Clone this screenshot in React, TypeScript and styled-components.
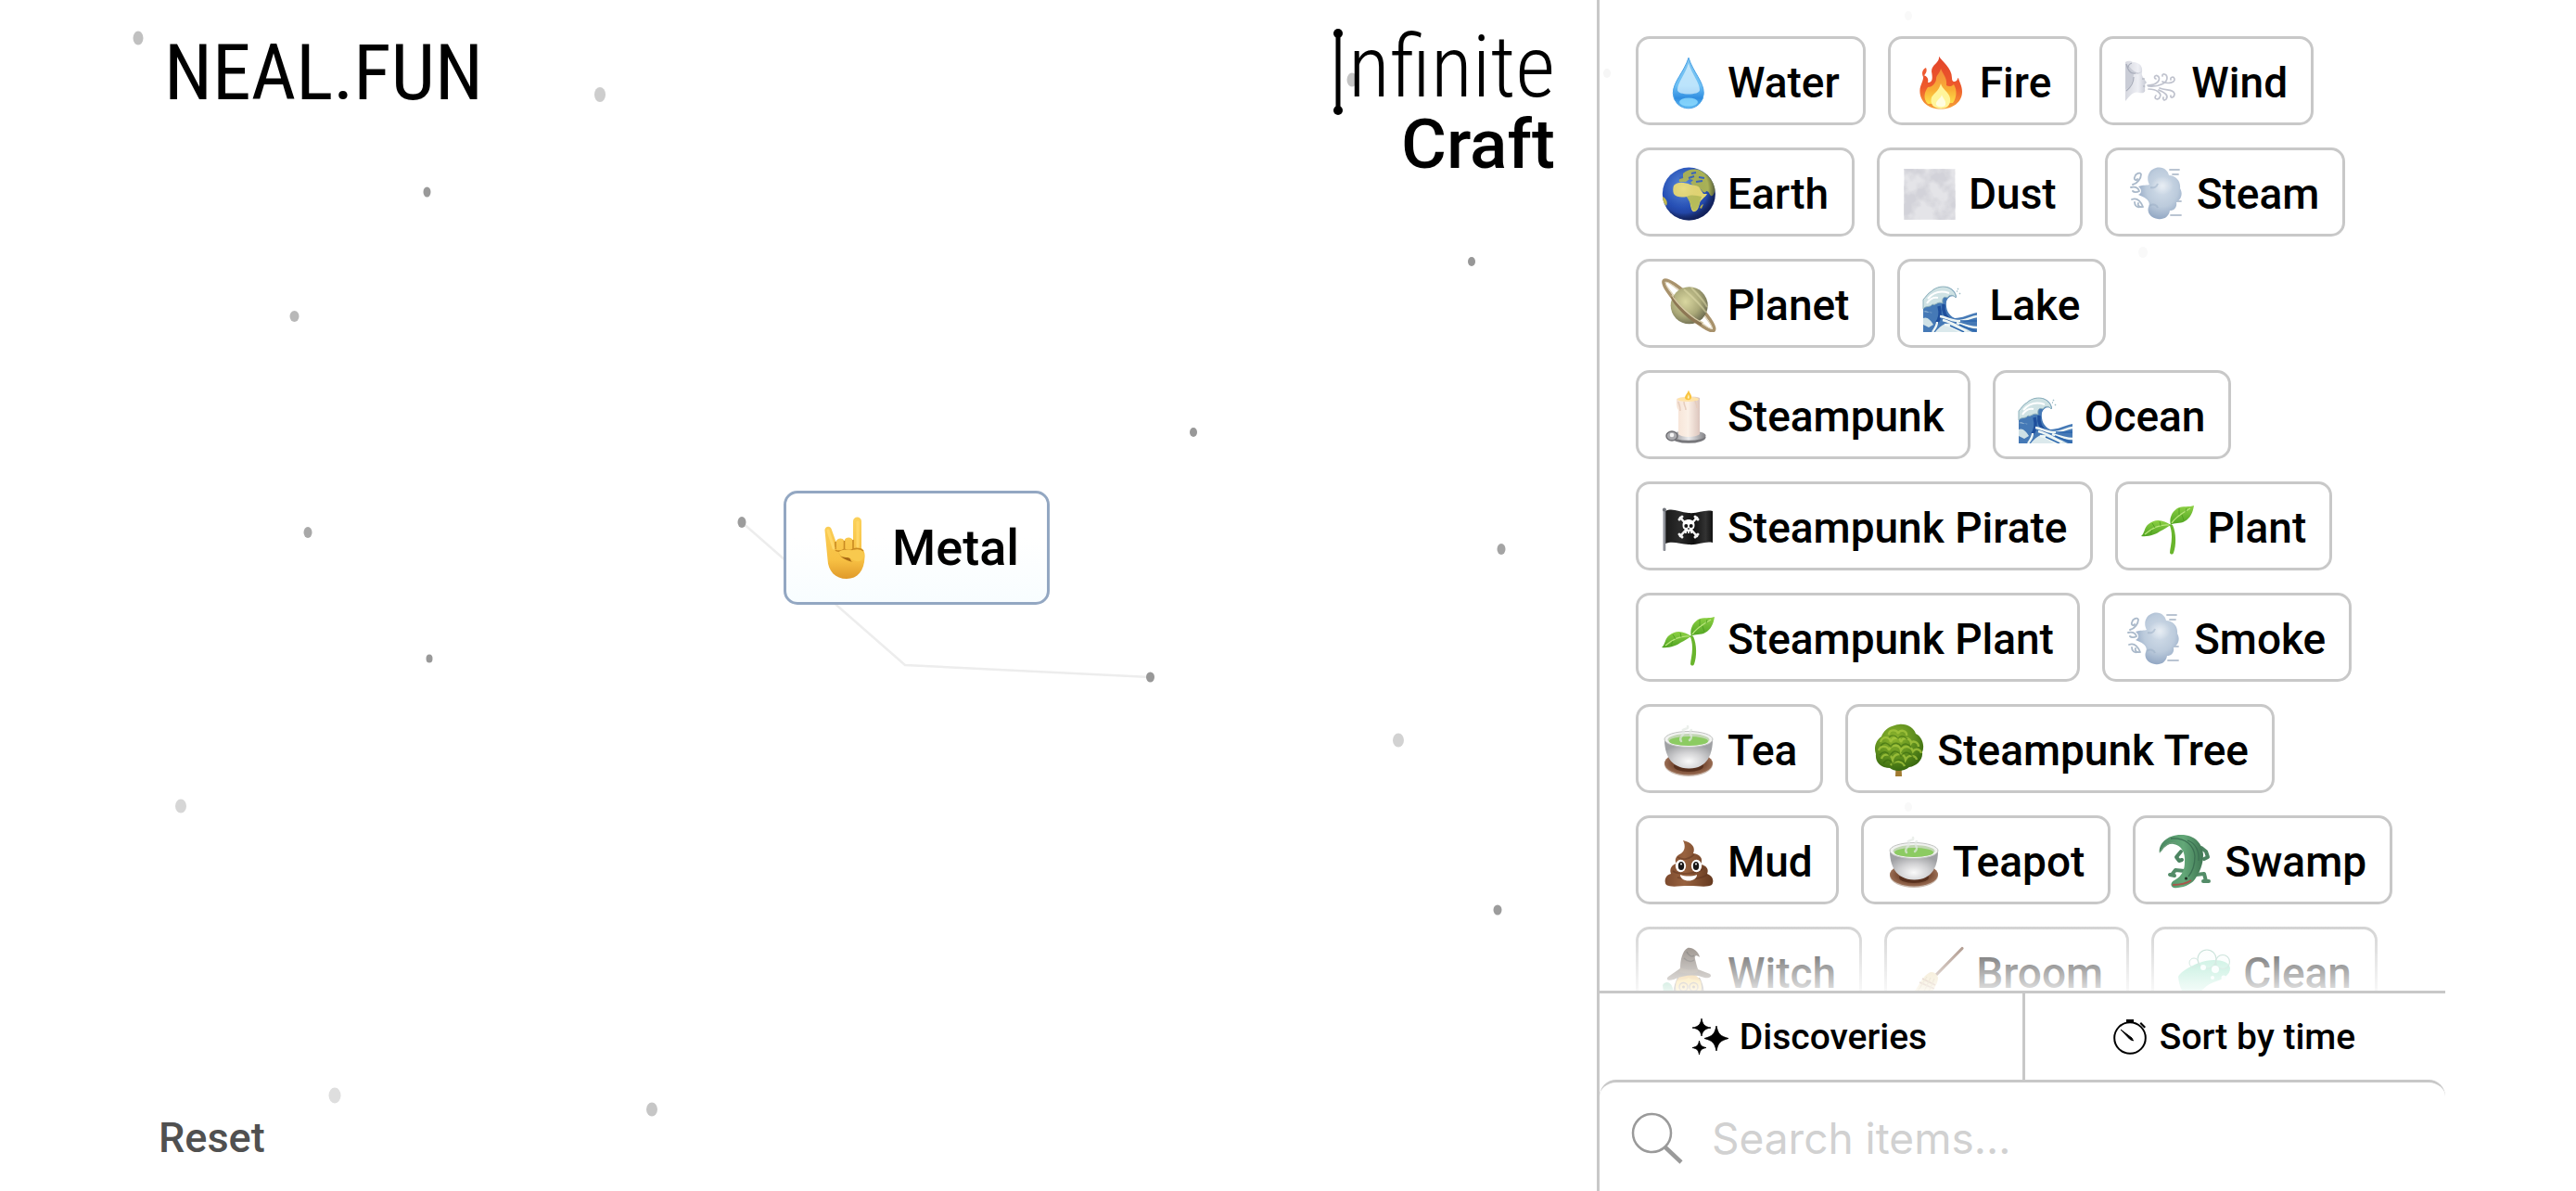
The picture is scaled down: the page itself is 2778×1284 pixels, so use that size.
import React, { useState } from "react";
import styled, { createGlobalStyle } from "styled-components";

const GlobalStyle = createGlobalStyle`
  *, *::before, *::after { box-sizing: border-box; }
  body {
    margin: 0;
    background: #fff;
    color: #000;
    font-family: Roboto, "Liberation Sans", sans-serif;
  }
`;

const line = "#c8c8c8";

const Page = styled.div`
  position: relative;
  display: flex;
  height: 100vh;
  padding: 0 141px;
  overflow: hidden;
`;

const Field = styled.svg`
  position: absolute;
  inset: 0;
  width: 100%;
  height: 100%;
  pointer-events: none;
`;

const Shades = styled.svg`
  position: absolute;
  width: 0;
  height: 0;
`;

const Canvas = styled.main`
  position: relative;
  flex: 1;
  display: flex;
  flex-direction: column;
  justify-content: space-between;
  align-items: flex-start;
  padding: 0 45px 24px 30px;
`;

const Header = styled.header`
  display: flex;
  justify-content: space-between;
  align-self: stretch;
  padding-top: 31px;
`;

const SiteLink = styled.a`
  height: 96px;
  padding-left: 6px;
  color: #000;
  font-family: "Roboto Condensed", Roboto, sans-serif;
  font-size: 84px;
  font-weight: 400;
  line-height: 96px;
  text-decoration: none;
`;

const Title = styled.h1`
  display: flex;
  flex-direction: column;
  align-items: flex-end;
  margin: 0;
`;

const TitleTop = styled.span`
  display: flex;
  align-items: flex-start;
  gap: 5px;
  height: 84px;
  font-family: "Roboto Condensed", Roboto, sans-serif;
  font-size: 93px;
  font-weight: 300;
  line-height: 84px;
`;

const TitleBottom = styled.span`
  font-size: 75px;
  font-weight: 500;
  line-height: 80px;
`;

const ResetButton = styled.button`
  padding: 6px 0;
  border: 0;
  background: none;
  color: #505050;
  font: 500 45px/54px Roboto, sans-serif;
`;

const Node = styled.div`
  position: absolute;
  left: 704px;
  top: 529px;
  display: flex;
  align-items: center;
  gap: 17px;
  padding: 25px 30px 25px 31px;
  border: 3px solid #93a7c2;
  border-radius: 15px;
  background: linear-gradient(#fff 40%, #f8fdff);
  font-size: 54px;
  font-weight: 500;
  line-height: 67px;
`;

const Sidebar = styled.aside`
  position: relative;
  display: flex;
  flex-direction: column;
  width: 915px;
  border-left: 3px solid ${line};
`;

const Items = styled.div`
  position: relative;
  flex: 1;
  min-height: 0;
  display: flex;
  flex-wrap: wrap;
  align-content: flex-start;
  gap: 24px;
  padding: 39px 24px 0 39px;
  overflow: hidden;

  &::after {
    content: "";
    position: absolute;
    left: 0;
    right: 0;
    bottom: 0;
    height: 90px;
    background: linear-gradient(rgba(255, 255, 255, 0), rgba(255, 255, 255, 0.88));
  }
`;

const Chip = styled.button`
  display: flex;
  align-items: center;
  gap: 12px;
  height: 96px;
  padding: 4px 25px 0 24px;
  border: 3px solid ${line};
  border-radius: 15px;
  background: #fff;
  color: #000;
  font: 500 46px/58px Roboto, sans-serif;
`;

const Emoji = styled.svg<{ $large?: boolean }>`
  flex: none;
  width: ${(p) => (p.$large ? 66 : 60)}px;
  height: ${(p) => (p.$large ? 67 : 58)}px;
`;

const Controls = styled.div`
  display: grid;
  grid-template-columns: 1fr 1fr;
  border-top: 3px solid ${line};
`;

const Control = styled.button`
  display: flex;
  justify-content: center;
  align-items: center;
  gap: 12px;
  height: 93px;
  padding: 0 9px 0 6px;
  border: 0;
  background: #fff;
  color: #000;
  font: 500 39px/48px Roboto, sans-serif;

  & + & { border-left: 3px solid ${line}; }
`;

const ControlIcon = styled.svg`
  width: 39px;
  height: 39px;
`;

const Search = styled.label`
  display: flex;
  align-items: center;
  gap: 30px;
  height: 120px;
  padding: 3px 33px 0 34px;
  border-top: 3px solid ${line};
  border-radius: 18px;
  background: #fff;
`;

const SearchIcon = styled.svg`
  flex: none;
  width: 57px;
  height: 57px;
`;

const SearchInput = styled.input`
  flex: 1;
  min-width: 0;
  padding: 0;
  border: 0;
  outline: 0;
  background: none;
  color: #000;
  font: 400 46px/60px Inter, sans-serif;

  &::placeholder { color: #d1d1d1; opacity: 1; }
`;

type Dot = [x: number, y: number, rx: number, ry: number, fill: string];

const dots: Dot[] = [
  [149, 41, 5.5, 7.5, "#c0c0c0"],
  [647, 102, 6, 8, "#cdcdcd"],
  [460.5, 207, 4, 5.5, "#999"],
  [317.5, 341, 5, 6, "#b8b8b8"],
  [332, 574, 4.5, 6, "#a8a8a8"],
  [463, 710, 3.5, 4.5, "#999"],
  [195, 869, 6, 7.5, "#d6d6d6"],
  [361, 1181, 6.5, 8.5, "#dedede"],
  [703, 1196, 6, 7.5, "#c6c6c6"],
  [800, 563, 4.5, 6, "#9c9c9c"],
  [1240.5, 730, 4.5, 5.5, "#989898"],
  [1287, 466, 4, 5, "#989898"],
  [1587, 282, 4, 5, "#989898"],
  [1619, 592, 4.5, 6, "#a4a4a4"],
  [1508, 798, 6, 7.5, "#d2d2d2"],
  [1615, 981, 4.5, 5.5, "#9c9c9c"],
  [1458, 86, 5.5, 7.5, "#c4c4c4"],
  [1733, 79, 4, 5, "#f6f6f6"],
  [2311, 272, 5, 6, "#f9f9f9"],
  [2058, 17, 4, 5, "#f9f9f9"],
  [2058, 870, 4, 5, "#f9f9f9"],
];

const Wave = () => (
  <>
    <path d="M1 58V23C4 20 6 16 10 14C15 9 23 8 29 10C34 12 37 17 37 21C33 18 28 19 26 25C25 33 28 40 35 43C43 43 50 39 59 37V58Z" fill="#4579b6" />
    <path d="M14 58C20 50 26 47 33 49C42 52 50 56 54 58Z" fill="#dbe9ec" />
    <path d="M1 23C4 20 6 16 10 14C15 9 23 8 28 10C33 12 37 17 36 21C33 17 29 18 27 21C23 19 21 22 22 27C17 24 14 30 11 28C8 32 4 29 1 33Z" fill="#cfe2e4" stroke="#8fb2bc" strokeWidth="1" />
    <path d="M6 22C12 15 20 13 29 16M5 27C9 21 13 20 17 21" stroke="#fff" strokeWidth="2" fill="none" />
    <path d="M18 30C20 37 20 43 15 49M23 28C22 36 25 42 31 46" stroke="#1e4f9c" strokeWidth="3.5" fill="none" />
    <path d="M1 36C5 34 8 38 11 37M1 43C5 41 9 45 12 50L7 53L1 50Z" fill="#cfe1e6" />
    <path d="M19 41C26 42 31 46 38 46C46 46 52 42 59 41M22 45C32 47 41 54 48 57M24 50C30 50 38 56 41 58M37 48C46 51 53 53 59 53M16 47C16 52 13 55 11 58" stroke="#eef6f5" strokeWidth="2.4" fill="none" />
    <path d="M30 51L45 58M40 50L58 57M41 46L59 46" stroke="#2b66ad" strokeWidth="1.4" fill="none" />
    <path d="M38 11l1 1M41 16l-1 1M37 14l1 0" stroke="#9dbcc4" strokeWidth="1.5" />
  </>
);

const Cloud = () => (
  <>
    <path d="M43 3H53M48 37H55M44 52H55M46 8H52" stroke="#b9c4d2" strokeWidth="1.8" strokeLinecap="round" />
    <path d="M9 21C14 19 19 20 21 19C17 12 20 3 28 1C36-1 41 4 42 9C49 9 55 15 54 23C58 30 54 36 50 38C51 43 48 47 43 47C42 54 36 57 30 56C22 55 18 49 20 43C23 37 17 33 9 30C13 28 13 24 9 21Z" fill="url(#cloud)" />
    <ellipse cx="35" cy="20" rx="12" ry="10" fill="url(#mist)" />
    <path d="M22 22C26 23 29 21 30 18M21 42C25 39 29 41 30 44" stroke="#98abc3" strokeWidth="2" fill="none" opacity=".5" />
    <path d="M3 19C8 18 12 12 12 8C11 5 6 7 5 11C4 14 7 15 8 13M1 22C6 21 9 23 10 26C7 28 4 27 3 26M2 35C7 33 11 36 14 43C10 44 8 41 9 39M5 38C5 42 8 44 11 43" stroke="#aab9ca" strokeWidth="1.8" fill="none" strokeLinecap="round" />
  </>
);

const Sprout = () => (
  <>
    <path d="M31 25C33 28 34 33 34 39C34 46 32 52 32 56C33 58 35 58 36 56C39 48 39 35 35 26Z" fill="#69b52c" />
    <path d="M33 26C26 21 17 18 9 25C4 29 5 35 1 38C9 39 17 36 21 33C26 31 29 28 33 26Z" fill="url(#leaf)" />
    <path d="M33 26C31 19 34 12 40 8C46 5 53 7 58 5C57 12 54 19 48 22C43 25 37 23 33 26Z" fill="url(#leaf)" />
    <path d="M31 26C22 25 13 29 5 36M34 24C38 17 46 13 54 8" stroke="#b9e57c" strokeWidth="1.2" fill="none" />
    <path d="M13 24L16 29M21 22L22 27M11 36L13 31M42 8L42 15M50 8L49 12M47 21L45 15" stroke="#4a9a1e" strokeWidth=".8" />
  </>
);

const Tea = () => (
  <>
    <ellipse cx="30" cy="44" rx="26" ry="13" fill="#c9b9ae" />
    <ellipse cx="30" cy="43" rx="26" ry="12.5" fill="url(#saucer)" />
    <ellipse cx="30" cy="46" rx="16" ry="6" fill="#4b2716" opacity=".7" />
    <path d="M4 17C4 33 10 48 30 48.500S56 33 56 17Z" fill="url(#cup)" />
    <ellipse cx="30" cy="17" rx="26" ry="8.500" fill="#f1f2f0" stroke="#c2c4c2" strokeWidth="1" />
    <ellipse cx="30" cy="17.500" rx="22.500" ry="6.500" fill="#c2d6b4" />
    <ellipse cx="30" cy="19" rx="21" ry="5" fill="#8ccb62" />
    <path d="M22 19C18 14 28 12 24 7C27 4 30 7 29 3M31 18C37 13 28 11 33 7" stroke="#e3e8e2" strokeWidth="2.500" fill="none" opacity=".7" strokeLinecap="round" />
  </>
);

const art: Record<string, React.ReactNode> = {
  water: (
    <>
      <path d="M30 2.300C25 18 13.300 28 13.300 40.500A16.500 16.300 0 0 0 46.300 40.500C46.300 28 35 18 30 2.300Z" fill="url(#drop)" stroke="#4aa2e6" strokeWidth="1" />
      <path d="M30 8C26 21 18 29 18 37C18 43 42 43 42 37C42 29 34 21 30 8Z" fill="#e6f7ff" opacity=".65" />
      <ellipse cx="30" cy="50" rx="10" ry="4.500" fill="#8fdcff" opacity=".8" />
    </>
  ),
  fire: (
    <>
      <path d="M28 .7C31 6 42 13 42 24C42 28 44 29 47 27C48 26 48 24 49 24C50 29 53 32 53 39C53 50 43 57.500 30 57.500C17 57.500 7.400 50 7.400 38C7.400 31 12 27 11 21C16 22 17 26 16 29C22 29 21 23 20 17C20 9 29 8 28 .7Z" fill="url(#flame)" />
      <path d="M14 13C10 15 9 19 11 23C13 20 16 17 14 13Z" fill="#ee5b32" />
      <path d="M30 14C33 21 37 24 36 32C39 34 42 33 44 31C48 37 47 46 43 51L16 52C10 46 13 38 16 34C21 34 25 29 25 25C25 21 29 19 30 14Z" fill="url(#flameInner)" />
      <path d="M30 30C31 36 39 39 40 46C41 54 36 57 30 57C22 57 18 52 20 45C22 41 28 38 30 30Z" fill="#fff59a" />
      <path d="M31 42C32 46 36 48 35 53C34 56 27 56 25 53C24 48 30 47 31 42Z" fill="#fffde0" />
    </>
  ),
  wind: (
    <>
      <path d="M1 7C5 5 7 6 9 7C17 7 20 12 19 18C18 21 20 23 24 29L22 31C23 33 22 34 22 36C23 39 21 41 16 40C10 38 7 42 1 49Z" fill="url(#face)" />
      <path d="M1 9C5 9 7 16 13 18C16 19 18 18 19 16C17 21 12 20 10 18C10 25 8 31 4 35L1 36Z" fill="#c9ccd6" />
      <path d="M2 9C4 17 8 20 12 19M10 23C10 30 7 34 2 38M19 25H22M20 33H22M8 8C5 9 4 11 4 13" stroke="#a9adba" strokeWidth="1.200" fill="none" />
      <path d="M25 32C36 32 40 25 36 22C33 20 31 24 34 25M26 33C38 34 46 29 46 24C46 19 40 19 41 22M41 28C47 31 55 29 54 25C53 22 49 23 50 26M26 36C35 36 41 41 38 45C36 49 31 46 34 43M37 37C44 40 48 43 45 47C43 49 41 47 42 45M38 35C45 38 53 36 54 41C54 46 49 46 50 43" stroke="#c0c3ce" strokeWidth="1.700" fill="none" strokeLinecap="round" />
    </>
  ),
  earth: (
    <>
      <circle cx="30.300" cy="29" r="28.500" fill="url(#sea)" />
      <path d="M24 7C28 3 36 1 43 4C51 8 57 15 58.500 24C58 29 56 32 54 31C52 29 52 26 49 26C48 29 45 27 43 24C40 23 38 20 35 20L32 17L35 14L31 13L27 16L20 16C19 13 22 12 24 11Z" fill="#a9b257" />
      <path d="M14 20C19 15 26 17 32 19C37 20 41 20 42 23L46 29H50C48 33 43 35 42 39C41 43 40 47 37 48C33 49 33 44 32 42C32 38 30 35 28 32C23 33 17 33 14 29C13 26 13 23 14 20Z" fill="#e5d873" />
      <path d="M28 32C33 29 39 31 44 32C43 36 41 39 41 42C39 47 37 48 35 47C32 44 33 39 30 36Z" fill="#a8b550" opacity=".7" />
      <path d="M2 32C6 34 8 38 6 42C4 40 2 37 2 32ZM44 41L46 40L44 45L42 44Z" fill="#c2b952" />
      <path d="M30 12L36 10M38 16L45 15M41 11L47 12M20 12L24 11M33 7L38 6" stroke="#3863bd" strokeWidth="2" />
      <circle cx="30.300" cy="29" r="28.500" fill="url(#globeShade)" />
    </>
  ),
  dust: (
    <>
      <rect x="2.700" y="2.300" width="54.600" height="54.500" fill="#e4e4e8" />
      <rect x="2.700" y="2.300" width="54.600" height="54.500" filter="url(#haze)" opacity=".7" />
    </>
  ),
  cloud: <Cloud />,
  planet: (
    <>
      <ellipse cx="30.300" cy="29.300" rx="38" ry="7.500" transform="rotate(45 30.300 29.300)" fill="none" stroke="#a8926c" strokeWidth="3.600" />
      <ellipse cx="30.300" cy="29.300" rx="35" ry="4.500" transform="rotate(45 30.300 29.300)" fill="none" stroke="#ded3b8" strokeWidth="1.200" />
      <circle cx="30.700" cy="29.300" r="20" fill="url(#saturn)" />
      <path d="M25 12C33 19 42 27 49 37M33 10C39 17 46 23 50 31M14 21C20 31 28 40 37 47" stroke="#e3e0ae" strokeWidth="2" fill="none" opacity=".5" />
      <path d="M12.500 20C15 28 33 46 44 49.500" fill="none" stroke="#8d7754" strokeWidth="3.600" />
      <path d="M12 18C16 26 34 44 46 48" fill="none" stroke="#d8cba8" strokeWidth="1.200" />
    </>
  ),
  wave: <Wave />,
  candle: (
    <>
      <ellipse cx="30" cy="51.500" rx="18.500" ry="6.300" fill="#77777b" />
      <ellipse cx="30" cy="49.500" rx="18.500" ry="5.300" fill="url(#metal)" />
      <ellipse cx="12" cy="50" rx="6" ry="5" fill="#a9a9ad" stroke="#6f6f73" strokeWidth="1.500" />
      <circle cx="12" cy="49" r="2.300" fill="#f4f4f4" />
      <path d="M17 10C23 7 37 7 42 9V48C38 52 22 52 19 48V22C17 20 17 15 17 10Z" fill="url(#wax)" />
      <ellipse cx="29.500" cy="10.500" rx="11.500" ry="2.500" fill="#ffe3a6" />
      <path d="M19 13C20 18 21 17 21 23M25 13C25 18 27 18 27 22M37 12C38 17 39 15 39 20" stroke="#e6cdbd" strokeWidth="1.500" fill="none" />
      <path d="M30 .5C31 4 34 6 33 9C32 12 27 12 26 9C26 6 29 4 30 .5Z" fill="#f9c440" />
      <path d="M30 5C31 8 31 9 30 10C28 9 29 8 30 5Z" fill="#fff5bd" />
    </>
  ),
  flag: (
    <>
      <path d="M5 11C12 7 20 12 30 13C40 14 47 9 56 11V45C48 43 40 48 30 47C20 46 12 43 5 46Z" fill="url(#flagCloth)" />
      <rect x="2.500" y="9" width="2.800" height="45" rx="1" fill="#8d9097" />
      <circle cx="3.900" cy="9.500" r="2" fill="#6f7278" />
      <path d="M21 18L39 38M39 18L21 38" stroke="#f4f4f4" strokeWidth="2.500" strokeLinecap="round" />
      <path d="M20 20L23 17M37 17L40 20M20 36L23 39M37 39L40 36" stroke="#f4f4f4" strokeWidth="3" strokeLinecap="round" />
      <path d="M23.500 26C23.500 18 36.500 18 36.500 26C36.500 30 35 30 34 31V35H26V31C25 30 23.500 30 23.500 26Z" fill="#fff" />
      <circle cx="27.300" cy="27" r="2" fill="#151515" />
      <circle cx="32.700" cy="27" r="2" fill="#151515" />
      <path d="M30 29V31M28.500 33V35M31.500 33V35" stroke="#151515" strokeWidth="1.200" />
    </>
  ),
  sprout: <Sprout />,
  tea: <Tea />,
  tree: (
    <>
      <path d="M27.500 46H33.500L34 57H27Z" fill="#a17b31" />
      <path d="M31 1C40 0 47 5 49 11C56 14 59 24 56 31C57 39 50 46 42 47C36 52 26 52 21 48C12 48 5 42 6 33C3 25 7 17 12 14C14 7 22 2 31 1Z" fill="url(#crown)" />
      <path d="M20 12C20 6 29 6 30 11C31 6 40 7 39 13M11 20C13 13 21 14 22 20C24 14 32 14 33 20C35 14 43 15 44 21C46 18 52 20 52 25M9 29C11 23 19 24 20 29C22 22 32 22 33 29C36 23 44 24 46 30C49 26 54 28 55 32M12 38C14 32 22 32 24 39C26 31 37 31 38 39C41 33 49 34 50 39M22 45C26 39 35 40 37 46" fill="none" stroke="#a7c83f" strokeWidth="2.400" opacity=".75" />
      <path d="M20 15C24 11 27 13 30 16C33 12 37 14 40 17M11 24C15 19 19 21 22 25C26 19 31 21 33 25C37 20 41 22 44 26M10 34C14 29 18 30 21 35C25 28 30 29 33 35C38 29 42 31 46 36M14 43C18 37 22 39 24 44C28 37 34 39 38 44" fill="none" stroke="#33640d" strokeWidth="1.500" opacity=".55" />
    </>
  ),
  mud: (
    <>
      <path d="M24 6C33 8 38 13 35 20C43 21 46 26 43 32C50 33 52 38 50 42C56 44 58 50 55 54C50 57 40 55 30 55C20 55 11 57 6 54C3 50 5 43 11 42C9 37 12 32 17 31C14 27 17 22 22 20C26 17 27 12 24 6Z" fill="url(#mud)" />
      <path d="M18 24C24 28 32 26 36 21M13 39C20 44 42 42 47 35M18 46C28 49 43 48 50 43" stroke="#5d3420" strokeWidth="1.600" fill="none" opacity=".5" />
      <ellipse cx="21.500" cy="33.500" rx="5.600" ry="6.800" fill="#fff" />
      <ellipse cx="38.500" cy="33.500" rx="5.600" ry="6.800" fill="#fff" />
      <ellipse cx="22" cy="33.500" rx="3.200" ry="4.500" fill="#191717" />
      <ellipse cx="38" cy="33.500" rx="3.200" ry="4.500" fill="#191717" />
      <circle cx="22" cy="31.500" r="1" fill="#fff" />
      <circle cx="38" cy="31.500" r="1" fill="#fff" />
      <path d="M21 43C26 45 34 45 39 43C39 47 35 49.500 30 49.500S21 47 21 43Z" fill="#fff" />
    </>
  ),
  croc: (
    <>
      <path d="M25 18L20 24L23 28L26 27M47 14L52 18L54 24L50 26" stroke="#4c8461" strokeWidth="4" fill="none" strokeLinejoin="round" strokeLinecap="round" />
      <path d="M29 39L19 38L15 43M41 43L50 42L52 50M13 43L18 44M49 50L55 50" stroke="#538c68" strokeWidth="4" fill="none" strokeLinejoin="round" strokeLinecap="round" />
      <path d="M2 20C0 10 10 0 25 0C41 0 48 10 49 21C49 32 45 41 40 48C35 55 23 58 17 57C13 55 14 51 18 49C27 44 29 37 29 29C30 19 25 11 17 10C10 9 5 13 2 20Z" fill="url(#croc)" />
      <path d="M14 4C31 3 39 12 40 23C40 33 38 39 33 45M32 6C41 9 45 18 44 28" stroke="#3c7153" strokeWidth="1.300" fill="none" />
      <path d="M16 54C24 54 32 52 36 49" stroke="#a8564b" strokeWidth="1.800" fill="none" />
      <circle cx="30.500" cy="47" r="1.500" fill="#1d2b20" />
      <path d="M3 18C7 11 14 7 20 9" stroke="#6a9b78" strokeWidth="1.200" fill="none" />
    </>
  ),
  witch: (
    <>
      <path d="M18 34C14 42 12 52 15 58H46C48 50 46 42 42 34Z" fill="#3b2d23" />
      <path d="M2 42C6 36 12 40 13 46C15 52 10 58 4 58Z" fill="#4fb58a" />
      <circle cx="30" cy="44" r="14" fill="#f5c33c" />
      <path d="M16 40C20 34 25 38 30 34C35 38 40 34 44 40C42 34 38 30 30 30S18 34 16 40Z" fill="#e2a12e" />
      <circle cx="24.500" cy="44" r="4.500" fill="none" stroke="#6c5a4e" strokeWidth="1.500" />
      <circle cx="35.500" cy="44" r="4.500" fill="none" stroke="#6c5a4e" strokeWidth="1.500" />
      <circle cx="24.500" cy="44" r="1.500" fill="#3f2a1a" />
      <circle cx="35.500" cy="44" r="1.500" fill="#3f2a1a" />
      <path d="M21 24C21 16 23 5 29 2C34 1 41 6 42 12C38 9 36 10 37 14C38 18 39 22 40 25L53 30C56 33 52 35 47 34C37 30 25 31 14 36C8 38 5 36 8 33Z" fill="#5a4d42" />
      <path d="M21 23C28 26 35 26 40 24V28C34 30 27 30 20 28Z" fill="#6a5a48" />
      <path d="M28 6C30 11 34 12 36 10M25 13C29 17 33 17 36 15" stroke="#2d2620" strokeWidth="1.400" fill="none" />
    </>
  ),
  broom: (
    <>
      <path d="M57 2.500L29 31" stroke="#7c5743" strokeWidth="3.200" strokeLinecap="round" />
      <path d="M21 29C25 26 30 30 31 34C31 41 25 47 21 58H4C2 55 3 51 6 48C11 42 14 33 21 29Z" fill="#e6cf94" />
      <path d="M11 39L27 46M14 35L28 42" stroke="#a8744f" strokeWidth="1.500" />
      <path d="M19 33L7 52M23 34L13 55M27 35L18 56" stroke="#bfa468" strokeWidth="1.200" />
    </>
  ),
  soap: (
    <>
      <path d="M2 33C5 26 26 15 40 15C50 15 58 18 58 24C58 31 50 36 40 39C31 42 28 50 18 54C8 58 3 44 2 33Z" fill="url(#soap)" />
      <circle cx="33" cy="14" r="10" fill="#e9fbf5" fillOpacity=".25" stroke="#9cc9ba" strokeWidth="1.200" />
      <circle cx="50" cy="17" r="7.500" fill="#e9fbf5" fillOpacity=".25" stroke="#9cc9ba" strokeWidth="1.200" />
      <circle cx="19" cy="18" r="5" fill="none" stroke="#9cc9ba" strokeWidth="1" />
      <circle cx="29" cy="23" r="3" fill="#f2fffb" />
      <circle cx="42" cy="25" r="4" fill="#f2fffb" />
      <circle cx="51" cy="34" r="2.500" fill="#f2fffb" />
      <circle cx="39" cy="34" r="2" fill="#f2fffb" />
    </>
  ),
  horns: (
    <>
      <path d="M10.500 15C10 11 15.500 9 17.500 13L22.500 27C23 23 30 22 31.500 26C33 21 40 22 41 26L41 5C41-1 50-1 50 5V34C53 36 54 40 53.500 44C53 58 46 67 34 67C22 67 14 59 13.500 46Z" fill="url(#hand)" />
      <path d="M22 27V35M31.500 26V36M41 25V35M22 36C24 38 29 37 31.500 35C34 37 39 37 41 35C45 34 49 34 52 37" stroke="#c98a22" strokeWidth="1.600" fill="none" />
      <path d="M26 38C30 34 38 37 44 36C50 35 53 38 53 43C50 50 44 49 38 45C33 43 25 44 26 38Z" fill="#f8c94e" />
      <path d="M26 38C25 43 31 44 35 44C40 45 37 48 41 49C33 47 25 43 26 38Z" fill="#a86a15" />
      <path d="M14 15L20 34M46 6V32" stroke="#ffd768" strokeWidth="3" fill="none" strokeLinecap="round" />
    </>
  ),
};

const items: { name: string; icon: string }[] = [
  { name: "Water", icon: "water" },
  { name: "Fire", icon: "fire" },
  { name: "Wind", icon: "wind" },
  { name: "Earth", icon: "earth" },
  { name: "Dust", icon: "dust" },
  { name: "Steam", icon: "cloud" },
  { name: "Planet", icon: "planet" },
  { name: "Lake", icon: "wave" },
  { name: "Steampunk", icon: "candle" },
  { name: "Ocean", icon: "wave" },
  { name: "Steampunk Pirate", icon: "flag" },
  { name: "Plant", icon: "sprout" },
  { name: "Steampunk Plant", icon: "sprout" },
  { name: "Smoke", icon: "cloud" },
  { name: "Tea", icon: "tea" },
  { name: "Steampunk Tree", icon: "tree" },
  { name: "Mud", icon: "mud" },
  { name: "Teapot", icon: "tea" },
  { name: "Swamp", icon: "croc" },
  { name: "Witch", icon: "witch" },
  { name: "Broom", icon: "broom" },
  { name: "Clean", icon: "soap" },
];

type Stop = [offset: number, color: string, opacity?: number];
const stops = (list: Stop[]) =>
  list.map(([o, c, a = 1]) => <stop key={o} offset={o} stopColor={c} stopOpacity={a} />);

const Linear = ({ id, s, flat }: { id: string; s: Stop[]; flat?: boolean }) => (
  <linearGradient id={id} x1="0" y1="0" x2={flat ? 1 : 0} y2={flat ? 0 : 1}>{stops(s)}</linearGradient>
);

const Radial = ({ id, s, cx = 0.5, cy = 0.5, r = 0.5 }: { id: string; s: Stop[]; cx?: number; cy?: number; r?: number }) => (
  <radialGradient id={id} cx={cx} cy={cy} r={r}>{stops(s)}</radialGradient>
);

const SharedShades = () => (
  <Shades aria-hidden="true">
    <defs>
      <Linear id="drop" s={[[0, "#7fc4f0"], [0.55, "#6cc0f5"], [0.8, "#2f8de0"], [1, "#63bdf2"]]} />
      <Linear id="flame" s={[[0, "#e2442b"], [0.6, "#ee5a2c"], [1, "#f6a336"]]} />
      <Linear id="flameInner" s={[[0, "#f28a3c"], [0.6, "#f9ae35"], [1, "#fde04a"]]} />
      <Linear id="face" flat s={[[0, "#d5d7df"], [0.6, "#eeeff4"], [1, "#c4c7d2"]]} />
      <Radial id="sea" cx={0.4} cy={0.35} r={0.7} s={[[0, "#4f86e0"], [0.6, "#2650b8"], [1, "#1b2f7c"]]} />
      <Radial id="globeShade" cx={0.4} cy={0.4} r={0.62} s={[[0, "#fff", 0.12], [0.75, "#000", 0], [1, "#0a1440", 0.6]]} />
      <Radial id="mist" s={[[0, "#fff", 0.5], [1, "#fff", 0]]} />
      <Radial id="cloud" cx={0.55} cy={0.4} r={0.6} s={[[0, "#d3deea"], [0.6, "#bccbdc"], [1, "#93a8c4"]]} />
      <Linear id="leaf" s={[[0, "#8ed145"], [1, "#4fa321"]]} />
      <Radial id="saucer" s={[[0, "#5b301c"], [0.7, "#7d4f37"], [1, "#9a6e55"]]} />
      <Radial id="cup" cx={0.5} cy={0.75} r={0.6} s={[[0, "#fafafa"], [0.5, "#d2d2d4"], [1, "#a0a1a4"]]} />
      <Radial id="saturn" cx={0.4} cy={0.4} r={0.65} s={[[0, "#d9d7a0"], [0.6, "#aaa878"], [1, "#6c6b50"]]} />
      <Linear id="metal" flat s={[[0, "#8b8b8f"], [0.5, "#ececee"], [1, "#808084"]]} />
      <Linear id="wax" flat s={[[0, "#f6e3d6"], [0.5, "#fbf0e6"], [1, "#dcc5bd"]]} />
      <Linear id="flagCloth" flat s={[[0, "#1a1a1a"], [0.3, "#2b2b2b"], [0.6, "#111"], [0.85, "#333"], [1, "#111"]]} />
      <Radial id="crown" cx={0.4} cy={0.3} r={0.7} s={[[0, "#8db52e"], [0.6, "#5f8f1e"], [1, "#3a6a10"]]} />
      <Linear id="mud" flat s={[[0, "#7c4a2e"], [0.4, "#98623f"], [1, "#65391f"]]} />
      <Linear id="croc" flat s={[[0, "#4a8760"], [0.55, "#63a878"], [1, "#3f7653"]]} />
      <Linear id="soap" s={[[0, "#7fdcb9"], [1, "#9ce6cb"]]} />
      <Linear id="hand" s={[[0, "#fbd15a"], [0.7, "#f7c043"], [1, "#e09a2a"]]} />
      <filter id="haze" x="0" y="0" width="1" height="1">
        <feTurbulence type="fractalNoise" baseFrequency="0.05" numOctaves="3" seed="7" />
        <feColorMatrix values="0 0 0 0 0.6  0 0 0 0 0.6  0 0 0 0 0.65  4 0 0 0 -1.6" />
      </filter>
    </defs>
  </Shades>
);

export default function App() {
  const [query, setQuery] = useState("");
  const shown = items.filter((i) => i.name.toLowerCase().includes(query.toLowerCase()));

  return (
    <Page>
      <GlobalStyle />
      <SharedShades />
      <Field aria-hidden="true">
        <polyline points="800,563 976,717 1240,730" fill="none" stroke="#ededed" strokeWidth="2.5" />
        {dots.map(([x, y, rx, ry, fill]) => (
          <ellipse key={`${x}-${y}`} cx={x} cy={y} rx={rx} ry={ry} fill={fill} />
        ))}
      </Field>

      <Canvas>
        <Header>
          <SiteLink href="#">NEAL.FUN</SiteLink>
          <Title aria-label="Infinite Craft">
            <TitleTop>
              <svg width="12" height="94" viewBox="0 0 12 94" aria-hidden="true">
                <path d="M6 5V88" stroke="#000" strokeWidth="5" />
                <circle cx="6" cy="5" r="5" />
                <circle cx="6" cy="88" r="5" />
              </svg>
              nfinite
            </TitleTop>
            <TitleBottom>Craft</TitleBottom>
          </Title>
        </Header>

        <Node>
          <Emoji $large viewBox="0 0 66 67" aria-hidden="true">{art.horns}</Emoji>
          Metal
        </Node>

        <ResetButton type="button">Reset</ResetButton>
      </Canvas>

      <Sidebar>
        <Items>
          {shown.map((item) => (
            <Chip key={item.name} type="button">
              <Emoji viewBox="0 0 60 58" aria-hidden="true">{art[item.icon]}</Emoji>
              {item.name}
            </Chip>
          ))}
        </Items>
        <Controls>
          <Control type="button">
            <ControlIcon viewBox="0 0 39 39" aria-hidden="true">
              <path d="M10 0C11 6 13 9 20 10C13 11 11 14 10 19C9 14 7 11 0 10C7 9 9 6 10 0ZM26 8C28 17 30 19 39 21.500C30 24 28 26 26 35C24 26 22 24 13 21.500C22 19 24 17 26 8ZM7.500 24C8.500 29 10 30.500 15 31.500C10 32.500 8.500 34 7.500 39C6.500 34 5 32.500 0 31.500C5 30.500 6.500 29 7.500 24Z" stroke="#000" strokeWidth=".8" />
            </ControlIcon>
            Discoveries
          </Control>
          <Control type="button">
            <ControlIcon viewBox="0 0 39 39" aria-hidden="true">
              <circle cx="19" cy="21" r="16.800" fill="none" stroke="#000" strokeWidth="2" />
              <path d="M15 1H23V4H15ZM31 4L36 9L34.500 10.500L29.500 5.500Z" />
              <path d="M9 12L21 21L22.500 24L19 22.500Z" stroke="#000" />
            </ControlIcon>
            Sort by time
          </Control>
        </Controls>
        <Search>
          <SearchIcon viewBox="0 0 57 57" aria-hidden="true">
            <circle cx="22.500" cy="22.500" r="20.500" fill="none" stroke="#9a9a9a" strokeWidth="2.500" />
            <path d="M37 38L54 54" stroke="#9a9a9a" strokeWidth="4.500" />
          </SearchIcon>
          <SearchInput
            type="text"
            aria-label="Search items"
            placeholder="Search items..."
            value={query}
            onChange={(e) => setQuery(e.target.value)}
          />
        </Search>
      </Sidebar>
    </Page>
  );
}
